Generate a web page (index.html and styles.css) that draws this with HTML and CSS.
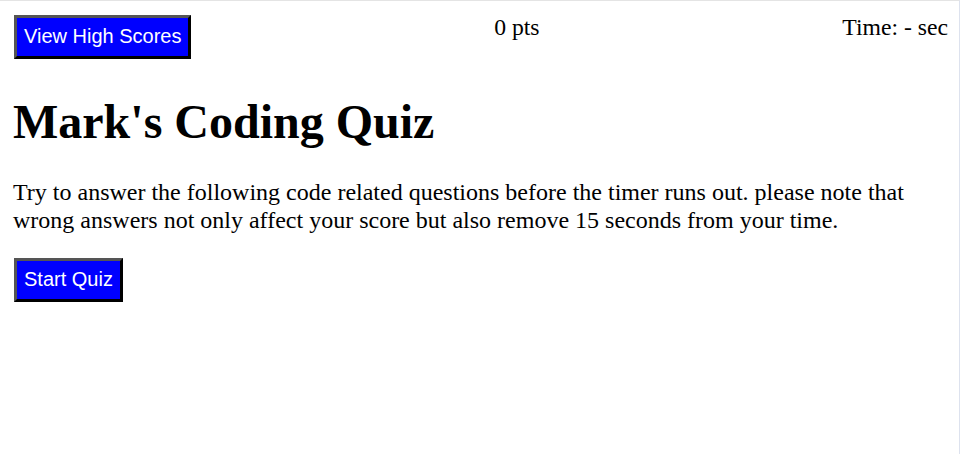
FILE: index.html
```html
<!DOCTYPE html>
<html lang="en">
<head>
<meta charset="utf-8">
<title>Mark's Coding Quiz</title>
<link rel="stylesheet" href="styles.css">
</head>
<body>
<div class="frame">
  <header class="topbar">
    <button class="btn">View High Scores</button>
    <span class="score">0 pts</span>
    <span class="timer">Time: - sec</span>
  </header>
  <main class="intro">
    <h1 class="title">Mark's Coding Quiz</h1>
    <p class="lead">Try to answer the following code related questions before the timer runs out. please note that wrong answers not only affect your score but also remove 15 seconds from your time.</p>
    <button class="btn">Start Quiz</button>
  </main>
</div>
</body>
</html>
```

FILE: styles.css
```css
html, body {
  margin: 0;
  padding: 0;
  background: #fff;
}

body {
  font-family: "Liberation Serif", "Times New Roman", serif;
  color: #000;
}

.frame {
  position: relative;
  width: 946px;
  height: 439px;
  padding: 14px 0 0 13px;
  border-top: 1px solid #e4e4e4;
  border-right: 1px solid #dde2ee;
  overflow: hidden;
}

.frame::after {
  content: "";
  position: absolute;
  right: -1px;
  top: 78px;
  width: 1px;
  height: 3px;
  background: #3b7de0;
}

.topbar {
  display: flex;
  justify-content: space-between;
  align-items: flex-start;
  padding: 0 0 0 1px;
  width: 934px;
}

.btn {
  font-family: "Liberation Sans", Arial, sans-serif;
  font-size: 20px;
  line-height: 23px;
  color: #fff;
  background: #0000ff;
  padding: 7px 7px 8px;
  border: 3px solid;
  border-color: #555 #000 #000 #555;
  margin: 0;
  cursor: pointer;
}

.score,
.timer {
  font-size: 23.7px;
  line-height: 24px;
}

.title {
  font-size: 48px;
  font-weight: bold;
  line-height: 53px;
  margin: 36px 0 30px;
}

.lead {
  font-size: 24px;
  line-height: 28px;
  margin: 0 0 24px;
  width: 934px;
}

.intro .btn {
  margin-left: 1px;
}
```
